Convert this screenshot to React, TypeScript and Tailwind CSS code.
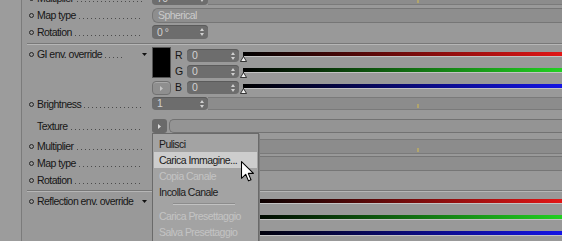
import type { ReactNode } from 'react';

type Channel = { name: string; bar: string };

const CHANNELS: Channel[] = [
  { name: 'R', bar: 'bg-[linear-gradient(to_right,#000000,#e21616)]' },
  { name: 'G', bar: 'bg-[linear-gradient(to_right,#000000,#22d022)]' },
  { name: 'B', bar: 'bg-[linear-gradient(to_right,#000000,#1414e4)]' },
];

const MENU = [
  { label: 'Pulisci' },
  { label: 'Carica Immagine...', active: true },
  { label: 'Copia Canale', disabled: true },
  { label: 'Incolla Canale' },
  { sep: true },
  { label: 'Carica Presettaggio', disabled: true },
  { label: 'Salva Presettaggio', disabled: true },
];

// piccoli disegni
const Spinner = () => (
  <svg width="4" height="8" viewBox="0 0 4 8" className="shrink-0">
    <path d="M2 0L4 3H0Z M0 5H4L2 8Z" fill="#d0d0d0" />
  </svg>
);

const Play = ({ color = '#dcdcdc' }: { color?: string }) => (
  <svg width="3" height="5" viewBox="0 0 3 5">
    <path d="M0 0L3 2.5L0 5Z" fill={color} />
  </svg>
);

const DropArrow = () => (
  <svg width="5" height="3" viewBox="0 0 5 3" className="shrink-0">
    <path d="M0 0H5L2.5 3Z" fill="#111" />
  </svg>
);

const Bullet = () => (
  <span className="w-[5px] h-[5px] shrink-0 rounded-full border border-[#262626]" />
);

const Label = ({
  text,
  bullet = true,
  arrow = false,
  leader = true,
}: {
  text: string;
  bullet?: boolean;
  arrow?: boolean;
  leader?: boolean;
}) => (
  <div className="flex items-center w-[130px] h-[15px] shrink-0 pl-[7px] pr-[4px]">
    {bullet ? <Bullet /> : <span className="w-[5px] shrink-0" />}
    <span className="ml-[3px] whitespace-nowrap">{text}</span>
    {leader && (
      <span
        className={`h-px mt-[5px] flex-1 ml-[3px] bg-[linear-gradient(to_right,#4c4c4c_1px,transparent_1px)] bg-[length:4px_1px] ${
          arrow ? 'mr-[18px]' : 'mr-[5px]'
        }`}
      />
    )}
    {arrow && (
      <span className="ml-auto mr-[1px] flex">
        <DropArrow />
      </span>
    )}
  </div>
);

const NumField = ({ value, w = 'w-[56px]', h = 'h-[14px]' }: { value?: string; w?: string; h?: string }) => (
  <div
    className={`${w} ${h} shrink-0 rounded-[4px] bg-[#6d6d6d] shadow-[inset_0_1px_0_#5b5b5b] flex items-center pl-[5px] pr-[4px] text-[#d2d2d2]`}
  >
    <span className="flex-1">{value}</span>
    <Spinner />
  </div>
);

const Track = ({ h = 'h-[14px]' }: { h?: string }) => (
  <div className={`flex-1 ${h} bg-[#8c8c8c] border-y border-[#7a7a7a] flex items-end`}>
    <span className="ml-[209px] w-[2px] h-[4px] mb-[1px] bg-[#b1a56c]" />
  </div>
);

const Combo = ({ value }: { value?: string }) => (
  <div className="flex-1 h-[15px] rounded-l-[6px] bg-[#8e8e8e] border border-r-0 border-[#767676] flex items-center pl-[5px] text-[#cbcbcb]">
    {value}
  </div>
);

const Row = ({
  h,
  label,
  bullet = true,
  children,
}: {
  h: string;
  label: string;
  bullet?: boolean;
  children?: ReactNode;
}) => (
  <div className={`flex items-start shrink-0 ${h}`}>
    <Label text={label} bullet={bullet} />
    <div className="flex-1 flex items-start min-w-0">{children}</div>
  </div>
);

const Separator = () => (
  <div className="h-[4px] shrink-0 pl-[5px] pt-px">
    <div className="h-[2px] border-t border-[#787878] border-b border-b-[#b6b6b6]" />
  </div>
);

/** Blocco colore: campione, canali RGB e barre sfumate (covered = nascosto dal menu) */
const ColorBlock = ({
  label,
  leader = true,
  covered = false,
}: {
  label: string;
  leader?: boolean;
  covered?: boolean;
}) => (
  <div className="flex items-start h-[51px] shrink-0">
    <div className="pt-px">
      <Label text={label} arrow leader={leader} />
    </div>
    <div className="flex flex-col shrink-0 w-[19px]">
      <div className="mt-px h-[31px] bg-black border border-[#555]" />
      <div className="mt-[3px] h-[14px] rounded-[4px] bg-[#8f8f8f] border border-[#717171] shadow-[inset_0_1px_0_#a8a8a8] flex items-center justify-center">
        <Play color="#c6c6c6" />
      </div>
    </div>
    <div className="flex-1 flex flex-col pt-[3px] ml-[4px]">
      {CHANNELS.map((c) => (
        <div key={c.name} className="flex items-start h-[16px]">
          <span className="w-[12px] h-[13px] flex items-center">{covered ? '' : c.name}</span>
          <NumField value={covered ? '' : '0'} w="w-[52px]" h="h-[13px]" />
          <div className="relative flex-1 ml-[4px] mt-[3px]">
            <div className={`h-[4px] ${c.bar} shadow-[0_1px_0_#c3c3c3]`} />
            <svg className="absolute left-[-3px] top-[3px]" width="7" height="7" viewBox="0 0 7 7">
              <path d="M3.5 0V2" stroke="#111" strokeWidth="1" />
              <path d="M3.5 1.5L6.5 6.5H0.5Z" fill="#f2f2f2" stroke="#111" strokeWidth="0.8" />
            </svg>
          </div>
        </div>
      ))}
    </div>
  </div>
);

const Menu = () => (
  <div className="absolute left-[152px] top-[133px] w-[107px] h-[112px] bg-[#a3a3a3] border border-[#6a6a6a] pt-[2px] shadow-[1px_1px_0_#7e7e7e]">
    {MENU.map((m, i) =>
      m.sep ? (
        <div key={i} className="h-[8px] flex items-center pl-[20px]">
          <div className="w-[62px] h-px bg-[#c2c2c2] shadow-[0_-1px_0_#8c8c8c]" />
        </div>
      ) : (
        <div
          key={i}
          className={`h-[16px] mx-px flex items-center pl-[5px] whitespace-nowrap ${
            m.active ? 'bg-[#cdcdcd]' : ''
          } ${m.disabled ? 'text-[#c4c4c4]' : 'text-[#1a1a1a]'}`}
        >
          {m.label}
        </div>
      )
    )}
  </div>
);

const Cursor = () => (
  <svg className="absolute left-[241px] top-[161px]" width="13" height="21" viewBox="0 0 12.5 20">
    <path
      d="M0.5 0.5V16.5L4.5 12.7L7.2 19L9.6 18L7 11.8H12Z"
      fill="#fff"
      stroke="#000"
      strokeWidth="1"
      strokeLinejoin="round"
    />
  </svg>
);

const App = () => (
  <div className="relative w-[562px] h-[241px] overflow-hidden bg-[#999999] flex font-['Liberation_Sans',Arial,sans-serif] text-[10.5px] tracking-[-0.55px] leading-none text-[#161616] select-none">
    <div className="w-[22px] shrink-0 bg-[#9c9c9c] border-r border-[#7b7b7b]" />

    <div className="flex-1 flex flex-col -mt-[9px]">
      <Row h="h-[17px]" label="Multiplier">
        <NumField value="70" />
        <Track />
      </Row>
      <Row h="h-[17px]" label="Map type">
        <Combo value="Spherical" />
      </Row>
      <Row h="h-[17px]" label="Rotation">
        <NumField value="0 °" />
      </Row>
      <Separator />

      <ColorBlock label="GI env. override" />

      <Row h="h-[22px]" label="Brightness">
        <NumField value="1" h="h-[13px]" />
        <Track h="h-[13px]" />
      </Row>
      <Row h="h-[20px]" label="Texture" bullet={false}>
        <div className="w-[15px] h-[14px] shrink-0 rounded-[3px] bg-[#6a6a6a] flex items-center justify-center">
          <Play />
        </div>
        <div className="ml-[2px] flex-1 h-[14px] rounded-l-[5px] bg-[#949494] border border-r-0 border-[#727272]" />
      </Row>
      {/* righe sotto il menu: i valori restano coperti */}
      <Row h="h-[17px]" label="Multiplier">
        <NumField h="h-[15px]" />
        <Track h="h-[15px]" />
      </Row>
      <Row h="h-[17px]" label="Map type">
        <Combo />
      </Row>
      <Row h="h-[16px]" label="Rotation">
        <NumField />
      </Row>
      <Separator />

      <ColorBlock label="Reflection env. override" leader={false} covered />
    </div>

    <Menu />
    <Cursor />
  </div>
);

export default App;
